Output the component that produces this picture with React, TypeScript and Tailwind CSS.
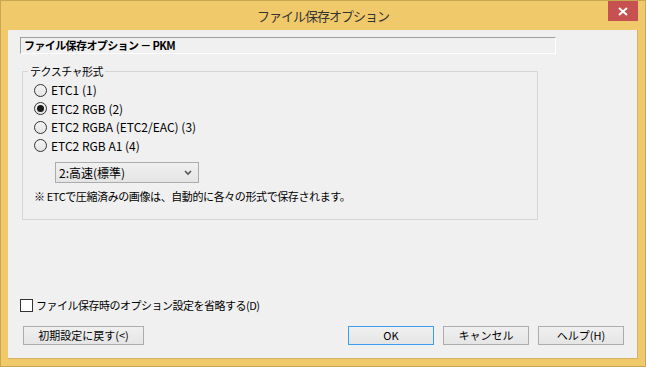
import React from "react";

const font = { fontFamily: '"Noto Sans CJK JP", "Liberation Sans", sans-serif' };

function Radio({ label, checked }: { label: string; checked?: boolean }) {
  return (
    <div className="flex items-center h-[18.5px]">
      <span className="w-[13px] h-[13px] rounded-full border border-[#333] bg-gradient-to-b from-[#f4f4f4] to-[#e4e4e4] flex items-center justify-center">
        {checked && <span className="w-[7px] h-[7px] rounded-full bg-[#1a1a1a]" />}
      </span>
      <span className="ml-[4px] text-[12px] leading-none text-black">{label}</span>
    </div>
  );
}

function Btn({ label, w, primary }: { label: string; w: string; primary?: boolean }) {
  return (
    <div
      className={`${w} h-[19px] flex items-center justify-center text-[11px] leading-none text-black bg-gradient-to-b from-[#f0f0f0] to-[#e5e5e5] border ${
        primary ? "border-[#3c9df0]" : "border-[#acacac]"
      }`}
    >
      {label}
    </div>
  );
}

export default function App() {
  return (
    <div style={font} className="w-[646px] h-[367px] bg-[#f0c96b] border border-[#c9a652] flex flex-col">
      {/* Title bar */}
      <div className="h-[29px] relative flex items-center justify-center">
        <span className="text-[13px] tracking-[-1px] text-[#333] mt-[1px]">ファイル保存オプション</span>
        <div className="absolute right-[7px] top-0 w-[30px] h-[20px] bg-[#c75050] flex items-center justify-center">
          <svg width="10" height="9" viewBox="0 0 10 9">
            <path d="M1 1 L9 8 M9 1 L1 8" stroke="#fff" strokeWidth="2" />
          </svg>
        </div>
      </div>

      {/* Content */}
      <div className="mx-[7px] flex-1 mb-[7px] bg-[#f0f0f0] border border-[#d6b264] border-t-0 border-l-0 flex flex-col">
        {/* Header label */}
        <div className="ml-[12px] mt-[7px] w-[536px] h-[17px] border-t border-l border-[#a0a0a0] border-b border-r border-b-white border-r-white flex items-center pl-[3px]">
          <span className="text-[11px] tracking-[-0.6px] font-bold leading-none text-black">ファイル保存オプション － PKM</span>
        </div>

        {/* Group box */}
        <div className="ml-[14px] mt-[17px] w-[516px] h-[149px] border border-[#d5d5d5] relative">
          <span className="absolute -top-[8px] left-[5px] px-[2px] bg-[#f0f0f0] text-[11px] tracking-[-0.5px] leading-[14px] text-black">
            テクスチャ形式
          </span>
          <div className="ml-[11px] mt-[9px] flex flex-col">
            <Radio label="ETC1 (1)" />
            <Radio label="ETC2 RGB (2)" checked />
            <Radio label="ETC2 RGBA (ETC2/EAC) (3)" />
            <Radio label="ETC2 RGB A1 (4)" />
          </div>
          <div className="ml-[32px] mt-[7px] w-[144px] h-[21px] border border-[#acacac] bg-gradient-to-b from-[#f0f0f0] to-[#e5e5e5] flex items-center justify-between pl-[3px] pr-[6px]">
            <span className="text-[12px] leading-none text-black">2:高速(標準)</span>
            <svg width="8" height="6" viewBox="0 0 8 6">
              <path d="M1 1 L4 4 L7 1" stroke="#555" strokeWidth="1.6" fill="none" />
            </svg>
          </div>
          <div className="ml-[11px] mt-[8px] text-[11px] tracking-[-0.4px] leading-none text-black">
            ※ ETCで圧縮済みの画像は、自動的に各々の形式で保存されます。
          </div>
        </div>

        {/* Checkbox */}
        <div className="ml-[12px] mt-[79px] flex items-center">
          <span className="w-[13px] h-[13px] border border-[#333] bg-white" />
          <span className="ml-[3px] text-[11px] tracking-[-0.5px] leading-none text-black">ファイル保存時のオプション設定を省略する(D)</span>
        </div>

        {/* Buttons */}
        <div className="mt-[14px] flex items-center">
          <div className="ml-[15px]">
            <Btn label="初期設定に戻す(<)" w="w-[121px]" />
          </div>
          <div className="ml-auto mr-[13px] flex gap-[9px]">
            <Btn label="OK" w="w-[86px]" primary />
            <Btn label="キャンセル" w="w-[86px]" />
            <Btn label="ヘルプ(H)" w="w-[86px]" />
          </div>
        </div>
      </div>
    </div>
  );
}
